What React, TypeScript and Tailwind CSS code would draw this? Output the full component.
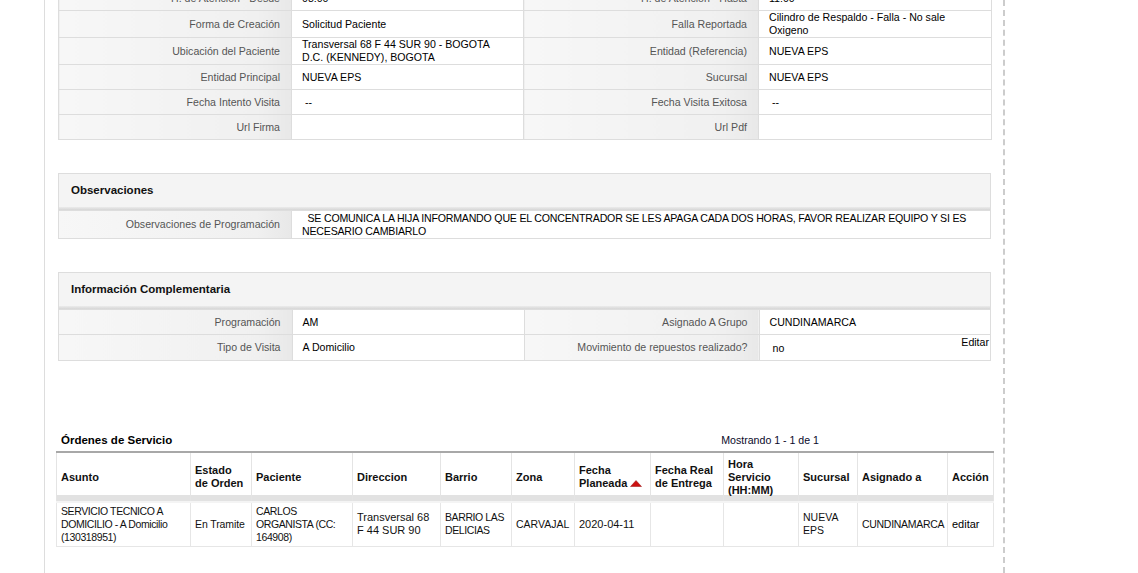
import React from 'react';

const FONT = "font-['Liberation_Sans',Arial,sans-serif]";

const labelCell =
  'border border-[#dddddd] bg-[linear-gradient(to_right,#f7f7f7,#f0f0f0_85%,#e8e8e8)] pr-[11px] text-right text-[#555555] align-middle';
const valueCell = 'border border-[#dddddd] bg-white pl-[10px] pr-[12px] text-left text-black align-middle';

type Pair = { label: string; value: React.ReactNode };

const DETAIL_ROWS: { left: Pair; right: Pair; h: string }[] = [
  { left: { label: 'H. de Atención - Desde', value: '08:00' }, right: { label: 'H. de Atención - Hasta', value: '11:00' }, h: 'h-[25px]' },
  { left: { label: 'Forma de Creación', value: 'Solicitud Paciente' }, right: { label: 'Falla Reportada', value: 'Cilindro de Respaldo - Falla - No sale Oxigeno' }, h: 'h-[26px]' },
  {
    left: { label: 'Ubicación del Paciente', value: 'Transversal 68 F 44 SUR 90 - BOGOTA D.C. (KENNEDY), BOGOTA' },
    right: { label: 'Entidad (Referencia)', value: 'NUEVA EPS' },
    h: 'h-[27px]',
  },
  { left: { label: 'Entidad Principal', value: 'NUEVA EPS' }, right: { label: 'Sucursal', value: 'NUEVA EPS' }, h: 'h-[25px]' },
  { left: { label: 'Fecha Intento Visita', value: '\u00a0--' }, right: { label: 'Fecha Visita Exitosa', value: '\u00a0--' }, h: 'h-[25px]' },
  { left: { label: 'Url Firma', value: '' }, right: { label: 'Url Pdf', value: '' }, h: 'h-[25px]' },
];

function SectionHeader({ title }: { title: string }) {
  return (
    <div>
      <div className="flex h-[33px] items-center bg-[#f4f4f4] pl-[12px] text-[11.5px] font-bold text-[#111111]">{title}</div>
      <div className="h-[3px] bg-gradient-to-b from-[#ebebeb] to-[#d6d6d6]" />
    </div>
  );
}

type Order = {
  asunto: string;
  estado: string;
  paciente: string;
  direccion: string;
  barrio: string;
  zona: string;
  fecha: string;
  fechaReal: string;
  hora: string;
  sucursal: string;
  asignado: string;
};

const ORDERS: Order[] = [
  {
    asunto: 'SERVICIO TECNICO A DOMICILIO - A Domicilio (130318951)',
    estado: 'En Tramite',
    paciente: 'CARLOS ORGANISTA (CC: 164908)',
    direccion: 'Transversal 68 F 44 SUR 90',
    barrio: 'BARRIO LAS DELICIAS',
    zona: 'CARVAJAL',
    fecha: '2020-04-11',
    fechaReal: '',
    hora: '',
    sucursal: 'NUEVA EPS',
    asignado: 'CUNDINAMARCA',
  },
];

const ORDER_COLS = [
  { key: 'asunto', w: 'w-[134px]' },
  { key: 'estado', w: 'w-[61px]' },
  { key: 'paciente', w: 'w-[101px]' },
  { key: 'direccion', w: 'w-[88px]' },
  { key: 'barrio', w: 'w-[71px]' },
  { key: 'zona', w: 'w-[63px]' },
  { key: 'fecha', w: 'w-[76px]' },
  { key: 'fechaReal', w: 'w-[73px]' },
  { key: 'hora', w: 'w-[75px]' },
  { key: 'sucursal', w: 'w-[59px]' },
  { key: 'asignado', w: 'w-[90px]' },
  { key: 'accion', w: 'w-[46px]' },
];

const th =
  'border-x border-[#e4e4e4] bg-white px-[4px] pt-[1px] text-left align-middle text-[11px] font-bold text-[#111111] shadow-[inset_0_-6px_0_#e2e2e2]';
const td = 'border border-[#e6e6e6] px-[4px] align-middle text-[10.5px] text-[#111111]';
// mayusculas algo mas apretadas, como en la tabla original
const tdCaps = `${td} tracking-[-0.4px]`;
const tdWide = `${td} text-[11px]`;

export default function App() {
  return (
    <div className={`${FONT} h-[573px] w-[1138px] overflow-hidden bg-white text-[10.6px] leading-[13px]`}>
      <div className="ml-[44px] flex h-full w-[961px] flex-col border-l border-r-2 border-[#dddddd] border-r-[#cccccc] border-dashed [border-left-style:solid] px-[13px]">
        {/* detalle */}
        <table className="-mt-[15px] w-[933px] table-fixed border-collapse">
          <colgroup>
            <col className="w-[233px]" />
            <col className="w-[232px]" />
            <col className="w-[235px]" />
            <col className="w-[233px]" />
          </colgroup>
          <tbody>
            {DETAIL_ROWS.map((r) => (
              <tr key={r.left.label} className={r.h}>
                <td className={labelCell}>{r.left.label}</td>
                <td className={valueCell}>{r.left.value}</td>
                <td className={labelCell}>{r.right.label}</td>
                <td className={valueCell}>{r.right.value}</td>
              </tr>
            ))}
          </tbody>
        </table>

        {/* observaciones */}
        <div className="mt-[33px] w-[933px] border border-[#dddddd]">
          <SectionHeader title="Observaciones" />
          <div className="flex h-[28px] border-t border-[#dddddd]">
            <div className={`${labelCell} flex w-[233px] shrink-0 items-center justify-end border-0 border-r`}>
              Observaciones de Programación
            </div>
            <div className="flex flex-1 items-center bg-white pl-[10px] pr-[10px] tracking-[-0.2px] text-black">
              {'\u00a0\u00a0SE COMUNICA LA HIJA INFORMANDO QUE EL CONCENTRADOR SE LES APAGA CADA DOS HORAS, FAVOR REALIZAR EQUIPO Y SI ES NECESARIO CAMBIARLO'}
            </div>
          </div>
        </div>

        {/* informacion complementaria */}
        <div className="mt-[33px] w-[933px] border border-[#dddddd]">
          <SectionHeader title="Información Complementaria" />
          <table className="w-[931px] table-fixed border-collapse">
            <colgroup>
              <col className="w-[233px]" />
              <col className="w-[232px]" />
              <col className="w-[235px]" />
              <col className="w-[231px]" />
            </colgroup>
            <tbody>
              <tr className="h-[25px]">
                <td className={`${labelCell} border-l-0`}>Programación</td>
                <td className={valueCell}>AM</td>
                <td className={labelCell}>Asignado A Grupo</td>
                <td className={`${valueCell} border-r-0`}>CUNDINAMARCA</td>
              </tr>
              <tr className="h-[25px]">
                <td className={`${labelCell} border-b-0 border-l-0`}>Tipo de Visita</td>
                <td className={`${valueCell} border-b-0`}>A Domicilio</td>
                <td className={`${labelCell} border-b-0`}>Movimiento de repuestos realizado?</td>
                <td className={`${valueCell} relative border-b-0 border-r-0 pl-[13px] pt-[3px]`}>
                  no
                  <a className="absolute right-[1px] top-[1px] text-black">Editar</a>
                </td>
              </tr>
            </tbody>
          </table>
        </div>

        {/* ordenes de servicio */}
        <div className="mt-[73px] flex w-[933px] items-end justify-between pb-[4px] pl-[3px] pr-[172px]">
          <span className="text-[11.5px] font-bold text-black">Órdenes de Servicio</span>
          <span className="text-[#0a0a2a]">Mostrando 1 - 1 de 1</span>
        </div>
        <table className="-mx-[2px] w-[937px] table-fixed border-collapse border-t-2 border-[#a8a8a8]">
          <colgroup>
            {ORDER_COLS.map((c) => (
              <col key={c.key} className={c.w} />
            ))}
          </colgroup>
          <thead>
            <tr className="h-[50px] border-b-2 border-[#f4f4f4]">
              <th className={th}>Asunto</th>
              <th className={th}>Estado de Orden</th>
              <th className={th}>Paciente</th>
              <th className={th}>Direccion</th>
              <th className={th}>Barrio</th>
              <th className={th}>Zona</th>
              <th className={th}>
                Fecha Planeada{' '}
                <svg width="12" height="7" viewBox="0 0 12 7" className="inline-block align-[0px]">
                  <path d="M6 0.5 L11.5 6.5 L0.5 6.5 Z" fill="#cc1111" stroke="#991111" strokeWidth="0.5" />
                </svg>
              </th>
              <th className={th}>Fecha Real de Entrega</th>
              <th className={th}>Hora Servicio (HH:MM)</th>
              <th className={th}>Sucursal</th>
              <th className={th}>Asignado a</th>
              <th className={th}>Acción</th>
            </tr>
          </thead>
          <tbody>
            {ORDERS.map((o) => (
              <tr key={o.asunto} className="h-[45px]">
                <td className={tdCaps}>{o.asunto}</td>
                <td className={`${td} whitespace-nowrap tracking-[-0.1px]`}>{o.estado}</td>
                <td className={tdCaps}>{o.paciente}</td>
                <td className={tdWide}>{o.direccion}</td>
                <td className={tdCaps}>{o.barrio}</td>
                <td className={td}>{o.zona}</td>
                <td className={tdWide}>{o.fecha}</td>
                <td className={td}>{o.fechaReal}</td>
                <td className={td}>{o.hora}</td>
                <td className={td}>{o.sucursal}</td>
                <td className={`${td} px-[3px] tracking-[-0.3px]`}>{o.asignado}</td>
                <td className={tdWide}>
                  <a className="text-black">editar</a>
                </td>
              </tr>
            ))}
          </tbody>
        </table>
      </div>
    </div>
  );
}
